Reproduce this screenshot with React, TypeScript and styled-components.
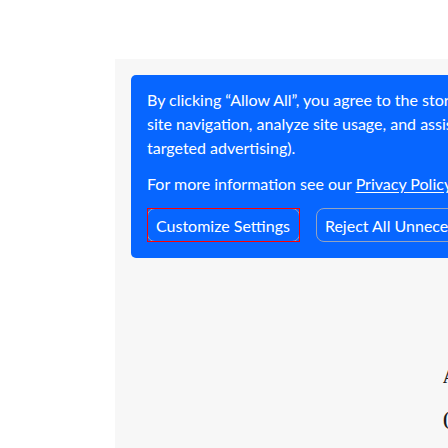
import React from "react";
import styled, { createGlobalStyle } from "styled-components";

const Global = createGlobalStyle`
  html, body { margin: 0; padding: 0; background: #ffffff; overflow: hidden; }
  body { width: 448px; height: 448px; }
  #root { width: 448px; height: 448px; }
`;

const Page = styled.div`
  width: 448px;
  height: 448px;
  overflow: hidden;
  padding: 59px 0 0 115px;
  box-sizing: border-box;
  background: #ffffff;
`;

const Section = styled.section`
  width: 600px;
  height: 400px;
  background: #f7f7f7;
  padding: 16px;
  box-sizing: border-box;
  display: flex;
  flex-direction: column;
`;

const Banner = styled.div`
  width: 900px;
  background: #0766ff;
  border-radius: 5px;
  padding: 13px 16px 16px;
  box-sizing: border-box;
  color: #ffffff;
  font-family: Lato, "Liberation Sans", sans-serif;
  font-size: 16px;
  line-height: 24px;
`;

const Para = styled.p`
  margin: 0 0 12px;
  white-space: nowrap;
`;

const Link = styled.a`
  color: #ffffff;
  text-decoration: underline;
  text-underline-offset: 2px;
`;

const Actions = styled.div`
  display: flex;
  gap: 16px;
`;

const FocusWrap = styled.span`
  position: relative;
  display: inline-flex;
  &::after {
    content: "";
    position: absolute;
    inset: 0;
    border: 1px solid #ff0000;
    pointer-events: none;
  }
`;

const Button = styled.button`
  height: 34px;
  padding: 0 9px 0 8px;
  border: 1px solid #94a3bf;
  border-radius: 8px;
  background: transparent;
  color: #ffffff;
  font-family: Lato, "Liberation Sans", sans-serif;
  font-size: 16px;
  white-space: nowrap;
  box-sizing: border-box;
`;

const Aside = styled.div`
  margin: 108px 0 0 312px;
  font-family: "Liberation Serif", serif;
  font-weight: bold;
  color: #1a1a1a;
  font-size: 18px;
`;

const AsideLine = styled.div<{ $gap?: number }>`
  line-height: 22px;
  margin-top: ${(p) => p.$gap ?? 0}px;
`;

export default function App() {
  return (
    <>
      <Global />
      <Page>
        <Section>
          <Banner>
            <Para>
              By clicking “Allow All”, you agree to the storing of cookies on your device to enhance
              <br />
              site navigation, analyze site usage, and assist in our marketing efforts (including
              <br />
              targeted advertising).
            </Para>
            <Para>
              For more information see our <Link href="#">Privacy Policy</Link>.
            </Para>
            <Actions>
              <FocusWrap>
                <Button>Customize Settings</Button>
              </FocusWrap>
              <Button>Reject All Unnecessary Cookies</Button>
              <Button>Allow All</Button>
            </Actions>
          </Banner>
          <Aside>
            <AsideLine>A</AsideLine>
            <AsideLine $gap={20}>(</AsideLine>
          </Aside>
        </Section>
      </Page>
    </>
  );
}
